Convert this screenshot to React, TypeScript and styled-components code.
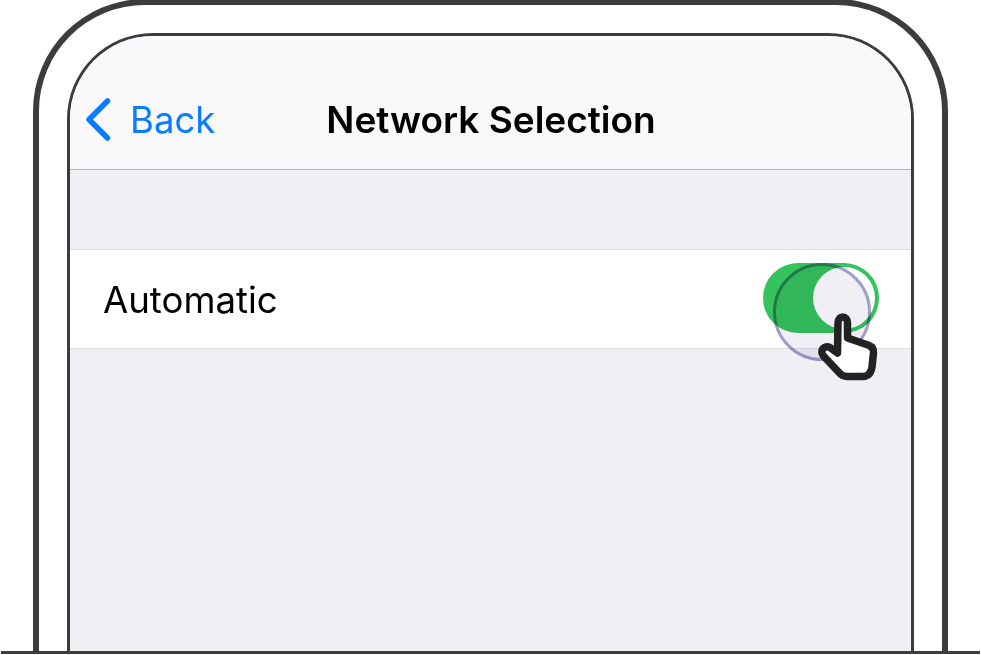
import React from 'react';
import styled, { createGlobalStyle } from 'styled-components';

const GlobalStyle = createGlobalStyle`
    html, body {
        margin: 0;
        padding: 0;
        background: #fff;
        font-family: "Inter", "Liberation Sans", sans-serif;
    }
`

const Stage = styled.div`
    width: 981px;
    height: 655px;
    overflow: hidden;
    box-sizing: border-box;
    padding: 0 1px 1px;
    display: flex;
    flex-direction: column;
`

const PhoneShell = styled.div`
    flex: 1;
    min-height: 0;
    box-sizing: border-box;
    margin: -1px 32px 0 32px;
    padding: 28px 28px 0;
    background: #fff;
    border: 6px solid #3c3c3c;
    border-bottom: 0;
    border-radius: 112px 112px 0 0;
    display: flex;
`

const BaseLine = styled.div`
    height: 3px;
    background: #3c3c3c;
    flex-shrink: 0;
`

const Screen = styled.div`
    flex: 1;
    box-sizing: border-box;
    border: 3px solid #3c3c3c;
    border-bottom: 0;
    border-radius: 86px 86px 0 0;
    background: #f0eff4;
    overflow: hidden;
    display: flex;
    flex-direction: column;
`

const NavBar = styled.div`
    height: 134px;
    flex-shrink: 0;
    box-sizing: border-box;
    background: #f9f9fb;
    border-bottom: 1px solid #b4b3b6;
    display: flex;
    align-items: center;
    position: relative;
    padding: 35px 0 0 15px;
`

const BackLink = styled.div`
    display: flex;
    align-items: center;
    gap: 19px;
    color: #0a7cff;
    font-size: 36.5px;
    line-height: 44px;
`

const NavTitle = styled.div`
    position: absolute;
    left: 1px;
    right: 0;
    text-align: center;
    font-size: 37px;
    line-height: 44px;
    font-weight: 600;
    color: #000;
`

const Spacer = styled.div`
    height: 79px;
    flex-shrink: 0;
`

const SettingRow = styled.div`
    height: 100px;
    flex-shrink: 0;
    box-sizing: border-box;
    background: #fff;
    border-top: 1px solid #dedde0;
    border-bottom: 1px solid #dedde0;
    display: flex;
    align-items: center;
    justify-content: space-between;
    padding: 0 32px 0 33px;
    position: relative;
`

const RowLabel = styled.div`
    font-size: 36.6px;
    line-height: 44px;
    color: #000;
    margin-top: 2px;
`

const Toggle = styled.div`
    width: 116px;
    height: 70px;
    border-radius: 35px;
    background: #34c35c;
    position: relative;
    margin-top: -2px;
`

const Knob = styled.div`
    position: absolute;
    top: 4px;
    right: 4px;
    width: 62px;
    height: 62px;
    border-radius: 50%;
    background: #fff;
`

const TapRing = styled.div`
    position: absolute;
    left: 10px;
    top: 0;
    width: 98px;
    height: 98px;
    box-sizing: border-box;
    border-radius: 50%;
    border: 3px solid #a09dc6;
    background: #f0eff6;
    mix-blend-mode: multiply;
`

const Pointer = styled.svg`
    position: absolute;
    left: 47px;
    top: 47px;
    width: 75px;
    height: 75px;
`

const ChevronLeft = () => (
    <svg width="26" height="44" viewBox="0 0 26 44" fill="none">
        <path d="M22.5 3 L4 21.5 L22.5 40" stroke="#0a7cff" strokeWidth="5.5" strokeLinecap="round" strokeLinejoin="round" />
    </svg>
);

const App = () => {
    return (
        <Stage>
            <GlobalStyle />
            <PhoneShell>
                <Screen>
                    <NavBar>
                        <NavTitle>Network Selection</NavTitle>
                        <BackLink>
                            <ChevronLeft />
                            <span>Back</span>
                        </BackLink>
                    </NavBar>
                    <Spacer />
                    <SettingRow>
                        <RowLabel>Automatic</RowLabel>
                        <Toggle>
                            <Knob />
                            <TapRing />
                            <Pointer viewBox="0 0 75 75" fill="none">
                                <path
                                    d="M28 13 C28 5 37.5 5 37.5 13 L37.5 28 L58 35 C62 36.5 64 39 63.5 43 L62 57 C61 63 58 66.5 53 66.5 L37 66.5 C33 66.5 31 65 29 62.5 L13.5 46 C9 41 14 34.5 20 37.5 L27.5 43 Z"
                                    fill="#fff"
                                    stroke="#222"
                                    strokeWidth="7.5"
                                    strokeLinejoin="round"
                                />
                            </Pointer>
                        </Toggle>
                    </SettingRow>
                </Screen>
            </PhoneShell>
            <BaseLine />
        </Stage>
    );
}

export default App;
